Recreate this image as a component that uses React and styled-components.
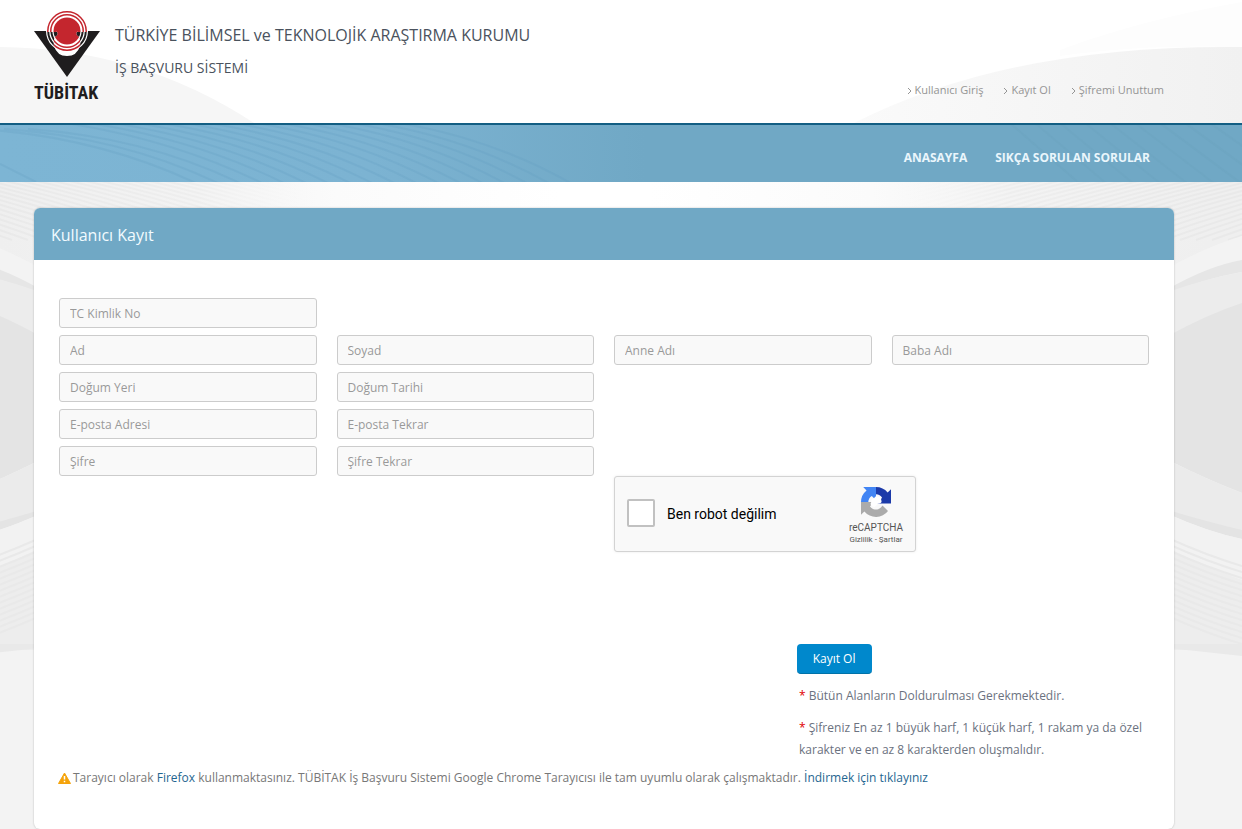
import React from 'react'
import styled, { createGlobalStyle } from 'styled-components'

const GlobalStyle = createGlobalStyle`
    body {
        margin: 0;
        background-color: #f3f3f3;
        color: #777777;
        font-family: 'Open Sans', 'Noto Sans', sans-serif;
        font-size: 12px;
        line-height: 22px;
    }

    a {
        text-decoration: none;
    }
`;

const Page = styled.div`
    position: relative;
    overflow: hidden;
    min-height: 100vh;
    box-sizing: border-box;
`;

const Backdrop = styled.svg`
    position: absolute;
    top: 0;
    left: 0;
    width: 100%;
    height: 100%;
    z-index: -1;
`;

const Header = styled.header`
    display: flex;
    justify-content: space-between;
    align-items: flex-end;
    height: 123px;
    padding: 0 78px 0 34px;
    border-bottom: 2px solid #135e83;
`;

const Brand = styled.div`
    display: flex;
    align-self: flex-start;
    gap: 12px;
    padding-top: 10px;
    color: #4a525d;

    h1 {
        margin: 14px 0 11px;
        font-size: 16px;
        font-weight: 400;
    }

    h2 {
        margin: 0;
        font-size: 14px;
        font-weight: 400;
    }
`;

const QuickLinks = styled.nav`
    display: flex;
    gap: 20px;
    padding-bottom: 22px;

    a {
        display: flex;
        align-items: center;
        gap: 3px;
        color: #959595;
        font-size: 11px;
    }
`;

const NavBar = styled.nav`
    position: relative;
    display: flex;
    justify-content: flex-end;
    align-items: center;
    gap: 28px;
    height: 57px;
    padding: 8px 92px 0 34px;
    box-sizing: border-box;
    background: linear-gradient(90deg, #7db5d4 0%, #7cb3d2 30%, #70a8c5 52%, #70a8c5 100%);

    a {
        position: relative;
        color: #eaf6fc;
        font-weight: 700;
    }
`;

const NavWaves = styled.svg`
    position: absolute;
    top: 0;
    left: 0;
    width: 100%;
    height: 100%;
`;

const Main = styled.main`
    padding: 26px 68px 0 34px;
`;

const Card = styled.section`
    background-color: #ffffff;
    border-radius: 6px;
    box-shadow: 0 0 2px rgba(0, 0, 0, 0.25);
`;

const CardTitle = styled.h2`
    margin: 0;
    padding: 16px 17px 14px;
    border-radius: 6px 6px 0 0;
    background-color: #70a8c5;
    color: #f2fbff;
    font-size: 16px;
    line-height: 22px;
    font-weight: 400;
`;

const Form = styled.form`
    display: grid;
    grid-template-columns: repeat(4, 1fr);
    column-gap: 20px;
    padding: 38px 25px 0;
`;

const Field = styled.input`
    grid-column-start: ${({ $first }) => ($first ? 1 : 'auto')};
    width: 100%;
    height: 30px;
    margin-bottom: 7px;
    padding: 0 10px;
    box-sizing: border-box;
    border: 1px solid #cccccc;
    border-radius: 3px;
    background-color: #f9f9f9;
    color: #555555;
    font: inherit;

    &::placeholder {
        color: #999999;
        opacity: 1;
    }
`;

const Captcha = styled.div`
    grid-row: 6;
    grid-column: 3 / span 2;
    justify-self: start;
    display: flex;
    align-items: center;
    width: 302px;
    height: 76px;
    margin-top: -7px;
    padding: 0 12px;
    box-sizing: border-box;
    border: 1px solid #d3d3d3;
    border-radius: 3px;
    background-color: #f9f9f9;
    box-shadow: 0 0 3px rgba(0, 0, 0, 0.08);
    font-family: Roboto, sans-serif;

    label {
        flex: 1;
        padding-left: 12px;
        color: #000000;
        font-size: 14px;
    }
`;

const Tick = styled.input`
    appearance: none;
    width: 28px;
    height: 28px;
    margin: 0 0 2px;
    border: 2px solid #c1c1c1;
    border-radius: 2px;
    background-color: #ffffff;

    &:checked {
        background-color: #4a90e2;
    }
`;

const CaptchaBrand = styled.div`
    display: flex;
    flex-direction: column;
    align-items: center;
    padding-top: 5px;
    color: #555555;
    font-size: 10px;
    line-height: 12px;

    svg {
        margin-bottom: 5px;
    }

    small {
        font-size: 8px;
        line-height: 12px;
    }

    a {
        color: inherit;
    }
`;

const Submit = styled.button`
    grid-row: 7;
    grid-column: 3;
    justify-self: end;
    height: 30px;
    margin-top: 92px;
    padding: 0 16px;
    border: 0;
    border-bottom: 1px solid #0072a8;
    border-radius: 4px;
    background-color: #0088cc;
    color: #ffffff;
    font: inherit;
`;

const Notes = styled.div`
    grid-row: 8;
    grid-column: 3 / span 2;
    justify-self: end;
    width: 350px;
    padding-top: 11px;
    color: #6b7280;

    p {
        margin: 0 0 10px;
    }

    p:last-child {
        margin-bottom: 0;
    }

    span {
        color: #e00000;
    }
`;

const BrowserNote = styled.p`
    display: flex;
    align-items: center;
    gap: 2px;
    margin: 0;
    padding: 6px 24px 40px;

    a {
        color: #1f6690;
    }
`;

const FIELDS = [
    { name: 'tc', label: 'TC Kimlik No', first: true },
    { name: 'ad', label: 'Ad', first: true },
    { name: 'soyad', label: 'Soyad' },
    { name: 'anne', label: 'Anne Adı' },
    { name: 'baba', label: 'Baba Adı' },
    { name: 'yer', label: 'Doğum Yeri', first: true },
    { name: 'tarih', label: 'Doğum Tarihi' },
    { name: 'eposta', label: 'E-posta Adresi', first: true },
    { name: 'epostaTekrar', label: 'E-posta Tekrar' },
    { name: 'sifre', label: 'Şifre', type: 'password', first: true },
    { name: 'sifreTekrar', label: 'Şifre Tekrar', type: 'password' },
]

const LINKS = ['Kullanıcı Giriş', 'Kayıt Ol', 'Şifremi Unuttum']

const range = (count) => Array.from({ length: count }, (_, i) => i)

// one half of the page background, the other half is its mirror image
const Wing = () => (
    <g>
        <path d='M-34 182H560V215H40V300H-34Z' fill='url(#strip)' />
        <g fill='none' stroke='url(#lines)' strokeWidth='2'>
            {range(40).map((i) => (
                <path key={i} d={`M${-330 + i * 16} 160Q${-180 + i * 16} 182 ${-20 + i * 16} 240`} />
            ))}
        </g>
        <path d='M-34 236Q0 246 40 268V300H-34Z' fill='#f3f3f3' />
        <path d='M-34 260Q0 266 40 289V293Q0 278 -34 272Z' fill='#e6e6e6' />
        <path d='M-34 272Q0 278 40 292V340H-34Z' fill='#ececec' />
        <path d='M-34 303Q0 314 40 336V460Q0 480 -34 493Z' fill='#e4e4e4' />
        <path d='M-34 493Q0 480 40 460V515L-34 535Z' fill='#ebebeb' />
        <path d='M-34 530Q0 522 40 510V514Q0 532 -34 539Z' fill='#e4e4e4' />
        <path d='M-34 539Q0 532 40 514V650H-34Z' fill='#f2f2f2' />
        <path d='M-34 580Q0 568 40 548V650H-34Z' fill='#ededed' />
        <g fill='none' stroke='#e9e9e9' strokeWidth='2'>
            {range(14).map((i) => (
                <path key={i} d={`M-34 ${566 + i * 6}Q0 ${556 + i * 6} 40 ${538 + i * 6}`} />
            ))}
        </g>
        <path d='M-34 644H40V648L-34 656Z' fill='#e9e9e9' />
    </g>
)

const PageBackdrop = () => (
    <Backdrop viewBox='0 0 1242 829' preserveAspectRatio='none' aria-hidden='true'>
        <defs>
            <linearGradient id='strip' gradientUnits='userSpaceOnUse' x1='0' x2='560' y1='0' y2='0'>
                <stop offset='0' stopColor='#efefef' />
                <stop offset='0.35' stopColor='#f3f3f3' />
                <stop offset='0.6' stopColor='#fbfbfb' />
                <stop offset='1' stopColor='#ffffff' />
            </linearGradient>
            <linearGradient id='lines' gradientUnits='userSpaceOnUse' x1='0' x2='330' y1='0' y2='0'>
                <stop offset='0' stopColor='#e9e9e9' />
                <stop offset='0.6' stopColor='#eeeeee' />
                <stop offset='1' stopColor='#fafafa' stopOpacity='0' />
            </linearGradient>
            <linearGradient id='hill' x1='0' x2='1' y1='0' y2='0'>
                <stop offset='0' stopColor='#fafafa' />
                <stop offset='1' stopColor='#f1f1f1' />
            </linearGradient>
        </defs>
        <rect width='1242' height='829' fill='#f3f3f3' />
        <rect x='400' y='182' width='500' height='40' fill='#ffffff' />
        <Wing />
        <g transform='translate(1208 0) scale(-1 1)'>
            <Wing />
        </g>
        <rect width='1242' height='123' fill='#ffffff' />
        <path d='M0 47Q140 48 254 123H0Z' fill='#f6f6f6' />
        <path d='M854 123Q1010 44 1242 47V123Z' fill='url(#hill)' />
        <path d='M1060 50Q1140 20 1242 2V47Q1140 44 1060 56Z' fill='#fdfdfd' />
    </Backdrop>
)

const Waves = () => (
    <NavWaves viewBox='0 0 1242 57' preserveAspectRatio='none' aria-hidden='true'>
        <g fill='none' stroke='#5f9dc0' strokeOpacity='0.22' strokeWidth='2'>
            {range(18).map((i) => (
                <path key={i} d={`M${-20 + i * 24} ${i < 3 ? 4 : -4}Q${100 + i * 23} 12 ${200 + i * 22} 60`} />
            ))}
            <path d='M0 39L36 57' />
        </g>
        <g fill='none' stroke='#689fbd' strokeOpacity='0.25' strokeWidth='2'>
            {range(9).map((i) => (
                <path key={i} d={`M${1010 + i * 25} -2L${1080 + i * 27} 59`} />
            ))}
        </g>
    </NavWaves>
)

const LogoText = styled.text`
    fill: #1f1d1e;
    font-family: 'Liberation Sans Narrow', 'Roboto Condensed', 'Liberation Sans', sans-serif;
    font-size: 18px;
    font-weight: 700;
`;

const Logo = () => (
    <svg width='69' height='92' viewBox='34 10 69 92' role='img' aria-label='TÜBİTAK'>
        <defs>
            <clipPath id='cup'>
                <path d='M56 31Q60 34 55 37Q53 40 54 46Q57 56 67 56Q77 56 80 46Q81 40 79 37Q74 34 78 31Z' />
            </clipPath>
            <clipPath id='upper'>
                <rect x='34' y='10' width='69' height='22' />
            </clipPath>
        </defs>
        <path d='M34 31H100L67 77Z' fill='#1f1d1e' />
        <g fill='none' stroke='#ffffff' strokeWidth='1.2'>
            <circle cx='67' cy='31' r='20.4' />
            <circle cx='67' cy='31' r='17.2' />
            <circle cx='67' cy='31' r='14' />
        </g>
        <g clipPath='url(#upper)'>
            <circle cx='67' cy='31' r='20.4' fill='#ffffff' />
            <circle cx='67' cy='31' r='19.2' fill='none' stroke='#c4262e' strokeWidth='1.5' />
            <circle cx='67' cy='31' r='16.2' fill='none' stroke='#c4262e' strokeWidth='1.5' />
            <circle cx='67' cy='31' r='13.5' fill='#c4262e' />
        </g>
        <g clipPath='url(#cup)'>
            <rect x='50' y='30' width='34' height='28' fill='#ffffff' />
            <circle cx='67' cy='31' r='19.2' fill='none' stroke='#c4262e' strokeWidth='1.5' />
            <circle cx='67' cy='31' r='16.2' fill='none' stroke='#c4262e' strokeWidth='1.5' />
            <circle cx='67' cy='31' r='13.5' fill='#c4262e' />
        </g>
        <LogoText x='34' y='99'>TÜBİTAK</LogoText>
    </svg>
)

const CaptchaLogo = () => (
    <svg width='30' height='30' viewBox='0 0 64 64' aria-hidden='true'>
        <path d='M64 32V4.6l-7.2 7.2A32 32 0 0 0 32 0v15.5c6 0 10.3 3 13 7.5L33 35H64Z' fill='#1c3aa9' />
        <path d='M32 0H4.7l7.1 7.2A32 32 0 0 0 0 32h15.6c0-6 3-10.4 7.5-13L32 28Z' fill='#4285f4' />
        <path d='M0 32v27.4l7.2-7.2A32 32 0 0 0 57.6 51L45.8 39.5c-6 11-20.5 11.5-26.7 1.4L28 32Z' fill='#ababab' />
        <path d='M22 32q-1-7 6-8q2-6 8-4q8 0 7 7q3 7-4 8q-4 0-5 3q-4 7-10 3q-6-4-2-9Z' fill='#ffffff' />
    </svg>
)

const Warning = () => (
    <svg width='13' height='12' viewBox='0 0 13 12' aria-hidden='true'>
        <path d='M6.5 1L12.5 11.5H0.5Z' fill='#f5a30a' stroke='#f5a30a' strokeLinejoin='round' />
        <path d='M6.5 4V7.5M6.5 8.7V10.2' stroke='#ffffff' strokeWidth='1.5' />
    </svg>
)

const App = () => {
    return (
        <>
            <GlobalStyle />
            <Page>
                <PageBackdrop />
                <Header>
                    <Brand>
                        <Logo />
                        <div>
                            <h1>TÜRKİYE BİLİMSEL ve TEKNOLOJİK ARAŞTIRMA KURUMU</h1>
                            <h2>İŞ BAŞVURU SİSTEMİ</h2>
                        </div>
                    </Brand>
                    <QuickLinks>
                        {LINKS.map((text) => (
                            <a href='#' key={text}>
                                <svg width='5' height='8' viewBox='0 0 5 8' aria-hidden='true'>
                                    <path d='M1 2L4 5L1 8' fill='none' stroke='#959595' />
                                </svg>
                                {text}
                            </a>
                        ))}
                    </QuickLinks>
                </Header>
                <NavBar>
                    <Waves />
                    <a href='#'>ANASAYFA</a>
                    <a href='#'>SIKÇA SORULAN SORULAR</a>
                </NavBar>
                <Main>
                    <Card>
                        <CardTitle>Kullanıcı Kayıt</CardTitle>
                        <Form onSubmit={(e) => e.preventDefault()}>
                            {FIELDS.map(({ name, label, type, first }) => (
                                <Field
                                    key={name}
                                    name={name}
                                    type={type || 'text'}
                                    placeholder={label}
                                    aria-label={label}
                                    $first={first}
                                />
                            ))}
                            <Captcha>
                                <Tick type='checkbox' id='robot' />
                                <label htmlFor='robot'>Ben robot değilim</label>
                                <CaptchaBrand>
                                    <CaptchaLogo />
                                    reCAPTCHA
                                    <small>
                                        <a href='#'>Gizlilik</a> - <a href='#'>Şartlar</a>
                                    </small>
                                </CaptchaBrand>
                            </Captcha>
                            <Submit type='submit'>Kayıt Ol</Submit>
                            <Notes>
                                <p><span>*</span> Bütün Alanların Doldurulması Gerekmektedir.</p>
                                <p>
                                    <span>*</span> Şifreniz En az 1 büyük harf, 1 küçük harf, 1 rakam ya da özel
                                    karakter ve en az 8 karakterden oluşmalıdır.
                                </p>
                            </Notes>
                        </Form>
                        <BrowserNote>
                            <Warning />
                            <span>
                                Tarayıcı olarak <a href='#'>Firefox</a> kullanmaktasınız. TÜBİTAK İş Başvuru Sistemi
                                Google Chrome Tarayıcısı ile tam uyumlu olarak çalışmaktadır.{' '}
                                <a href='#'>İndirmek için tıklayınız</a>
                            </span>
                        </BrowserNote>
                    </Card>
                </Main>
            </Page>
        </>
    )
}

export default App
